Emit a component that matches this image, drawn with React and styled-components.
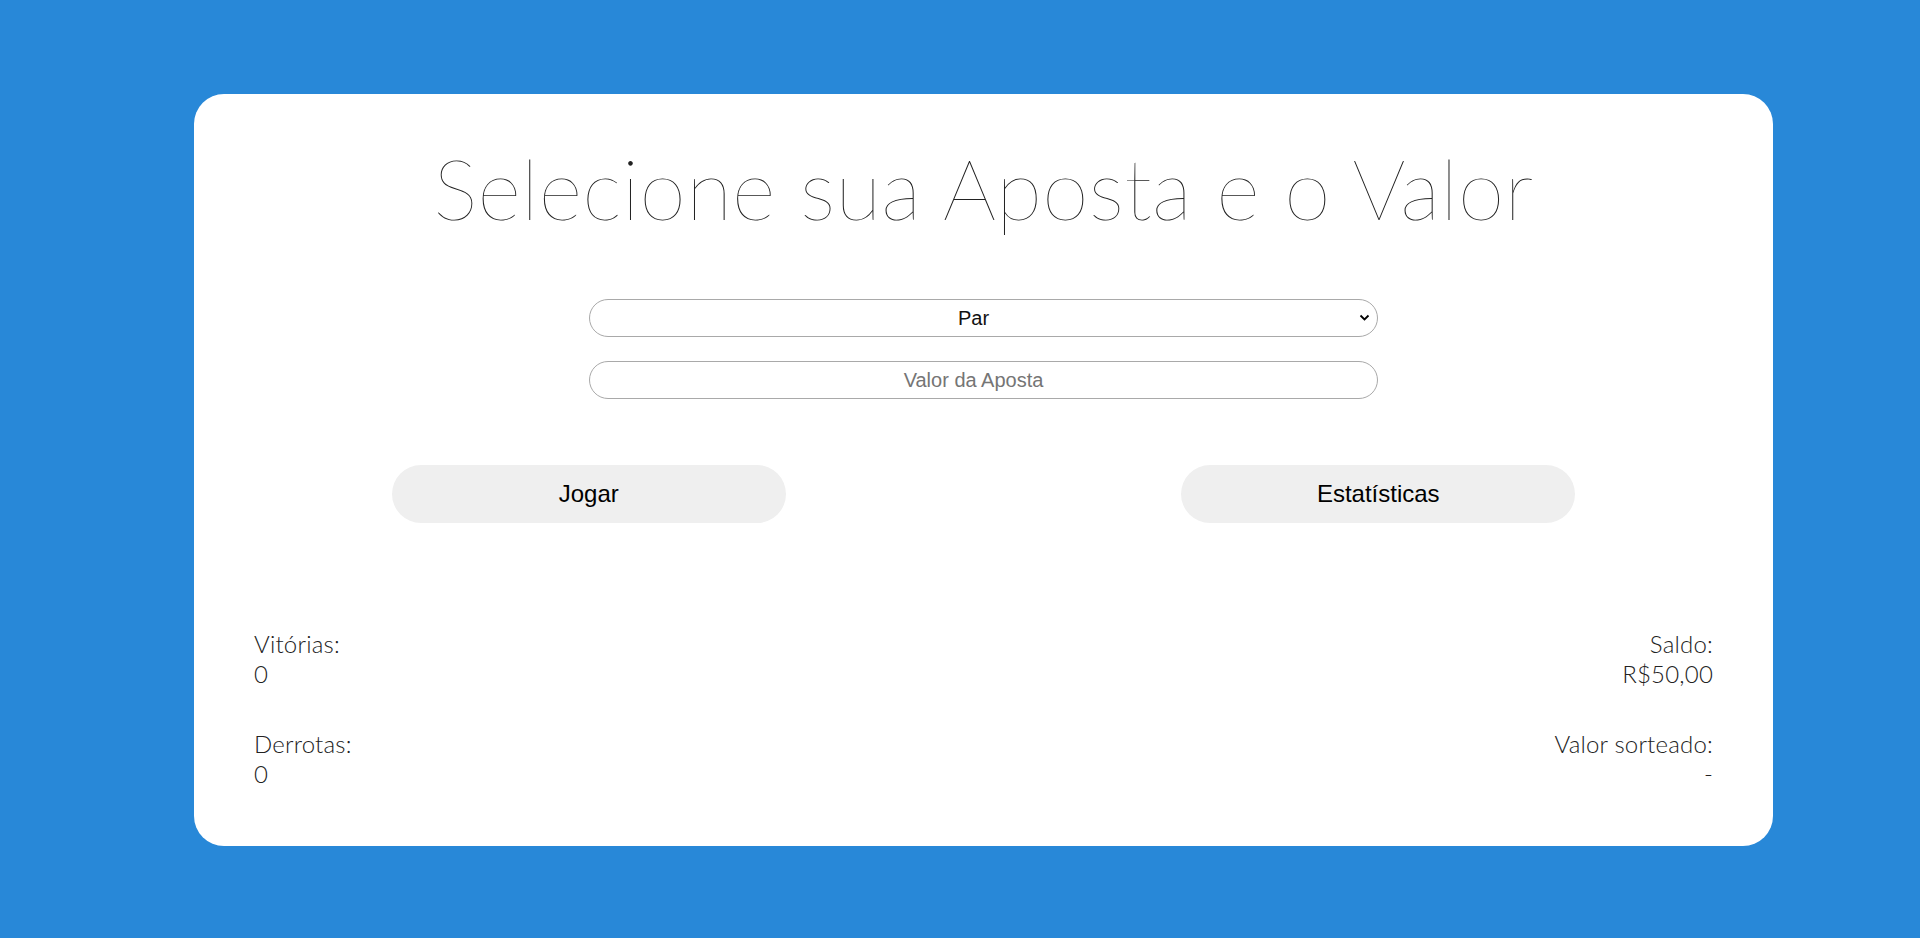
import React from "react";
import styled, { createGlobalStyle } from "styled-components";

const Global = createGlobalStyle`
  html, body { margin: 0; padding: 0; }
  body {
    background: #2888d8;
    min-height: 938px;
    font-family: "Lato", "Liberation Sans", sans-serif;
  }
`;

const Page = styled.div`
  padding: 94px 147px 92px 194px;
`;

const Card = styled.main`
  background: #ffffff;
  border-radius: 30px;
  padding: 0 60px 57px;
  display: flex;
  flex-direction: column;
  align-items: center;
`;

const Title = styled.h1`
  margin: 40px 0 57px;
  font-family: "Lato", sans-serif;
  font-weight: 100;
  font-size: 84px;
  letter-spacing: 0.3px;
  line-height: 108px;
  color: #222;
  text-align: center;
`;

const Field = styled.div`
  position: relative;
  width: 789px;
  margin-bottom: ${(p) => p.$mb || 0}px;
`;

const Select = styled.select`
  appearance: none;
  width: 100%;
  height: 38px;
  border: 1px solid #a9a9a9;
  border-radius: 19px;
  background: #fff;
  font-family: "Liberation Sans", Arial, sans-serif;
  font-size: 20px;
  font-weight: 400;
  color: #111;
  text-align: center;
  text-align-last: center;
  box-sizing: border-box;
  padding: 0 24px 0 4px;
  outline: none;
`;

const Chevron = styled.svg`
  position: absolute;
  right: 8px;
  top: 14px;
  width: 11px;
  height: 9px;
  pointer-events: none;
`;

const Input = styled.input`
  width: 100%;
  height: 38px;
  border: 1px solid #a9a9a9;
  border-radius: 19px;
  background: #fff;
  font-family: "Liberation Sans", Arial, sans-serif;
  font-size: 20px;
  text-align: center;
  box-sizing: border-box;
  padding: 0 22px 0 2px;
  outline: none;
  &::placeholder { color: #757575; }
`;

const ButtonRow = styled.div`
  align-self: stretch;
  margin: 0 -60px;
  display: grid;
  grid-template-columns: 1fr 1fr;
  justify-items: center;
`;

const Button = styled.button`
  width: 394px;
  height: 58px;
  border: none;
  border-radius: 29px;
  background: #efefef;
  font-family: "Liberation Sans", Arial, sans-serif;
  font-size: 24px;
  color: #000;
  cursor: pointer;
`;

const Stats = styled.div`
  align-self: stretch;
  margin-top: 106px;
  display: flex;
  justify-content: space-between;
`;

const Column = styled.div`
  display: flex;
  flex-direction: column;
  gap: 40px;
  text-align: ${(p) => p.$align};
`;

const Stat = styled.div`
  font-family: "Lato", sans-serif;
  font-weight: 300;
  font-size: 24px;
  letter-spacing: 0.2px;
  line-height: 30px;
  color: #222;
`;

export default function App() {
  return (
    <>
      <Global />
      <Page>
        <Card>
          <Title>Selecione sua Aposta e o Valor</Title>
          <Field $mb={24}>
            <Select defaultValue="par">
              <option value="par">Par</option>
              <option value="impar">Ímpar</option>
            </Select>
            <Chevron viewBox="0 0 11 9">
              <path d="M1.5 2.5 L5.5 6.5 L9.5 2.5" fill="none" stroke="#000" strokeWidth="1.8" />
            </Chevron>
          </Field>
          <Field $mb={66}>
            <Input type="text" placeholder="Valor da Aposta" />
          </Field>
          <ButtonRow>
            <Button>Jogar</Button>
            <Button>Estatísticas</Button>
          </ButtonRow>
          <Stats>
            <Column $align="left">
              <Stat>Vitórias:<br />0</Stat>
              <Stat>Derrotas:<br />0</Stat>
            </Column>
            <Column $align="right">
              <Stat>Saldo:<br />R$50,00</Stat>
              <Stat>Valor sorteado:<br />-</Stat>
            </Column>
          </Stats>
        </Card>
      </Page>
    </>
  );
}
